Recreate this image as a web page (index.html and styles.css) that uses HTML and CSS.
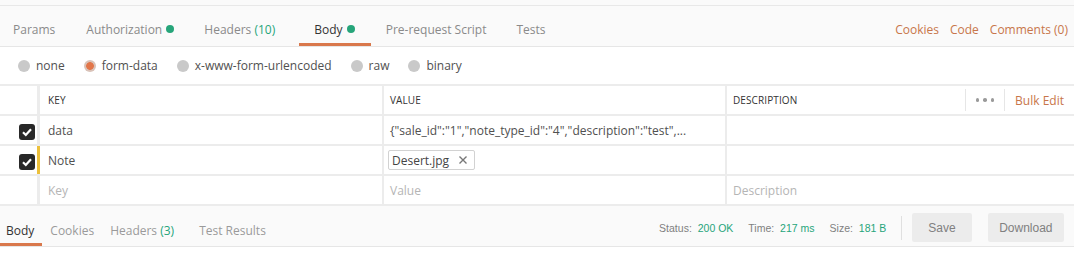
FILE: index.html
```html
<!DOCTYPE html>
<html lang="en">
<head>
  <meta charset="UTF-8" />
  <title>Request - Body</title>
  <link rel="stylesheet" href="styles.css">
</head>
<body>
  <div class="app">
    <div class="top-strip"></div>

    <div class="req-tabs">
      <div class="tab first">Params</div>
      <div class="tab">Authorization <span class="dot"></span></div>
      <div class="tab wide">Headers <span class="count">(10)</span></div>
      <div class="tab active">Body <span class="dot"></span></div>
      <div class="tab">Pre-request Script</div>
      <div class="tab">Tests</div>
      <div class="tab-links">
        <span>Cookies</span>
        <span>Code</span>
        <span>Comments (0)</span>
      </div>
    </div>

    <div class="body-modes">
      <label class="mode"><span class="radio"></span>none</label>
      <label class="mode"><span class="radio on"></span>form-data</label>
      <label class="mode"><span class="radio"></span>x-www-form-urlencoded</label>
      <label class="mode"><span class="radio"></span>raw</label>
      <label class="mode"><span class="radio"></span>binary</label>
    </div>

    <div class="kv-table">
      <div class="kv-row head">
        <div class="cell check"></div>
        <div class="cell key">KEY</div>
        <div class="cell value">VALUE</div>
        <div class="cell desc">
          <span class="desc-title">DESCRIPTION</span>
          <span class="more"><i></i><i></i><i></i></span>
          <span class="bulk">Bulk Edit</span>
        </div>
      </div>

      <div class="kv-row">
        <div class="cell check"><span class="checkbox"><svg width="16" height="16" viewBox="0 0 16 16"><path d="M4 8.3 L6.8 11 L12 5.2" fill="none" stroke="#fff" stroke-width="2.2"/></svg></span></div>
        <div class="cell key">data</div>
        <div class="cell value">{"sale_id":"1","note_type_id":"4","description":"test",...</div>
        <div class="cell desc"></div>
      </div>

      <div class="kv-row">
        <div class="cell check"><span class="checkbox"><svg width="16" height="16" viewBox="0 0 16 16"><path d="M4 8.3 L6.8 11 L12 5.2" fill="none" stroke="#fff" stroke-width="2.2"/></svg></span></div>
        <div class="cell key marked">Note</div>
        <div class="cell value file">
          <span class="chip">Desert.jpg <svg width="10" height="10" viewBox="0 0 10 10"><path d="M1.5 1.5 L8.5 8.5 M8.5 1.5 L1.5 8.5" stroke="#777" stroke-width="1.4"/></svg></span>
        </div>
        <div class="cell desc"></div>
      </div>

      <div class="kv-row">
        <div class="cell check"></div>
        <div class="cell key placeholder">Key</div>
        <div class="cell value placeholder">Value</div>
        <div class="cell desc placeholder">Description</div>
      </div>
    </div>

    <div class="resp-bar">
      <div class="rtab active">Body</div>
      <div class="rtab">Cookies</div>
      <div class="rtab wide">Headers <span class="count">(3)</span></div>
      <div class="rtab">Test Results</div>
      <div class="resp-meta">
        <span>Status: <b>200 OK</b></span>
        <span>Time: <b>217 ms</b></span>
        <span>Size: <b>181 B</b></span>
        <span class="sep"></span>
        <button>Save</button>
        <button>Download</button>
      </div>
    </div>
  </div>
</body>
</html>
```

FILE: styles.css
```css
body { margin: 0; font-family: "Open Sans", Arial, sans-serif; font-size: 12px; color: #505050; background: #fff; }
.app { width: 1074px; }

.top-strip { height: 5px; background: #fafafa; border-bottom: 1px solid #e8e8e8; }

/* request tabs */
.req-tabs { display: flex; height: 40px; background: #fafafa; border-bottom: 1px solid #e6e6e6; }
.tab { display: flex; align-items: center; padding: 6px 15px 0; color: #8a8a8a; white-space: pre; }
.tab.first { padding-left: 13px; padding-right: 16px; }
.tab.wide { padding-right: 24px; }
.tab.active { color: #333; padding-right: 16px; box-shadow: inset 0 -3px 0 #d9784c; }
.dot { display: inline-block; width: 8px; height: 8px; border-radius: 50%; background: #26a57a; margin-left: 1px; }
.count { color: #26a57a; }
.tab-links { margin-left: auto; display: flex; align-items: center; gap: 11px; padding: 7px 6px 0 0; color: #c8764a; }

/* body modes */
.body-modes { display: flex; align-items: center; height: 37px; padding-left: 18px; }
.mode { display: flex; align-items: center; gap: 6px; margin-right: 19px; color: #505050; }
.radio { width: 12px; height: 12px; border-radius: 50%; background: #c9c9c9; }
.radio.on { background: radial-gradient(circle, #e2764a 0 3.5px, #d9c2b8 4.2px); }

/* key value table */
.kv-table { border-top: 2px solid #ececec; }
.kv-row { display: flex; height: 28px; border-bottom: 2px solid #ececec; }
.cell { display: flex; align-items: center; white-space: nowrap; overflow: hidden; }
.cell.check { width: 37px; padding-left: 19px; box-sizing: border-box; }
.cell.key { width: 345px; box-sizing: border-box; border-left: 3px solid #ececec; padding-left: 8px; }
.cell.key.marked { border-left-color: #ecc03b; }
.cell.value { width: 343px; box-sizing: border-box; border-left: 2px solid #ececec; padding-left: 6px; }
.cell.value.file { padding-left: 4px; }
.cell.desc { flex: 1; border-left: 2px solid #ececec; padding-left: 6px; }
.placeholder { color: #b5b5b5; }

.head .cell { font-size: 10px; color: #333; letter-spacing: 0.1px; }
.head .desc-title { flex: 1; }
.more { display: flex; align-items: center; gap: 4px; height: 22px; padding: 0 10px; border-left: 1px solid #e6e6e6; border-right: 1px solid #e6e6e6; }
.more i { width: 3.5px; height: 3.5px; border-radius: 50%; background: #9a9a9a; }
.bulk { font-size: 12px; color: #c8764a; letter-spacing: 0; padding: 0 10px 0 10px; }

.checkbox { width: 16px; height: 16px; border-radius: 3px; background: #282828; display: flex; margin-top: 3px; }

.chip { display: flex; align-items: center; gap: 9px; height: 18px; padding: 0 6px 0 3px; border: 1px solid #d2d2d2; border-radius: 2px; color: #444; }

/* response bar */
.resp-bar { display: flex; height: 40px; background: #fafafa; border-bottom: 1px solid #e6e6e6; }
.rtab { display: flex; align-items: center; padding: 9px 8px 0; color: #9a9a9a; white-space: pre; }
.rtab.active { color: #333; padding: 9px 8px 0 6px; box-shadow: inset 0 -3px 0 #d9784c; }
.rtab.wide { padding-right: 17px; }
.resp-meta { margin-left: auto; display: flex; align-items: center; padding: 3px 10px 0 0; font-family: "Liberation Sans", Arial, sans-serif; font-size: 10.5px; color: #808080; }
.resp-meta span { margin-right: 15px; }
.resp-meta b { font-weight: normal; color: #26a57a; margin-left: 3px; }
.resp-meta .sep { width: 1px; height: 24px; background: #e0e0e0; margin-right: 10px; }
.resp-meta button { font-family: "Liberation Sans", Arial, sans-serif; font-size: 12px; color: #808080; background: #ececec; border: none; border-radius: 2px; height: 29px; padding: 0 16px; margin-left: 0; }
.resp-meta button + button { margin-left: 16px; padding: 0 11.5px; }
```
